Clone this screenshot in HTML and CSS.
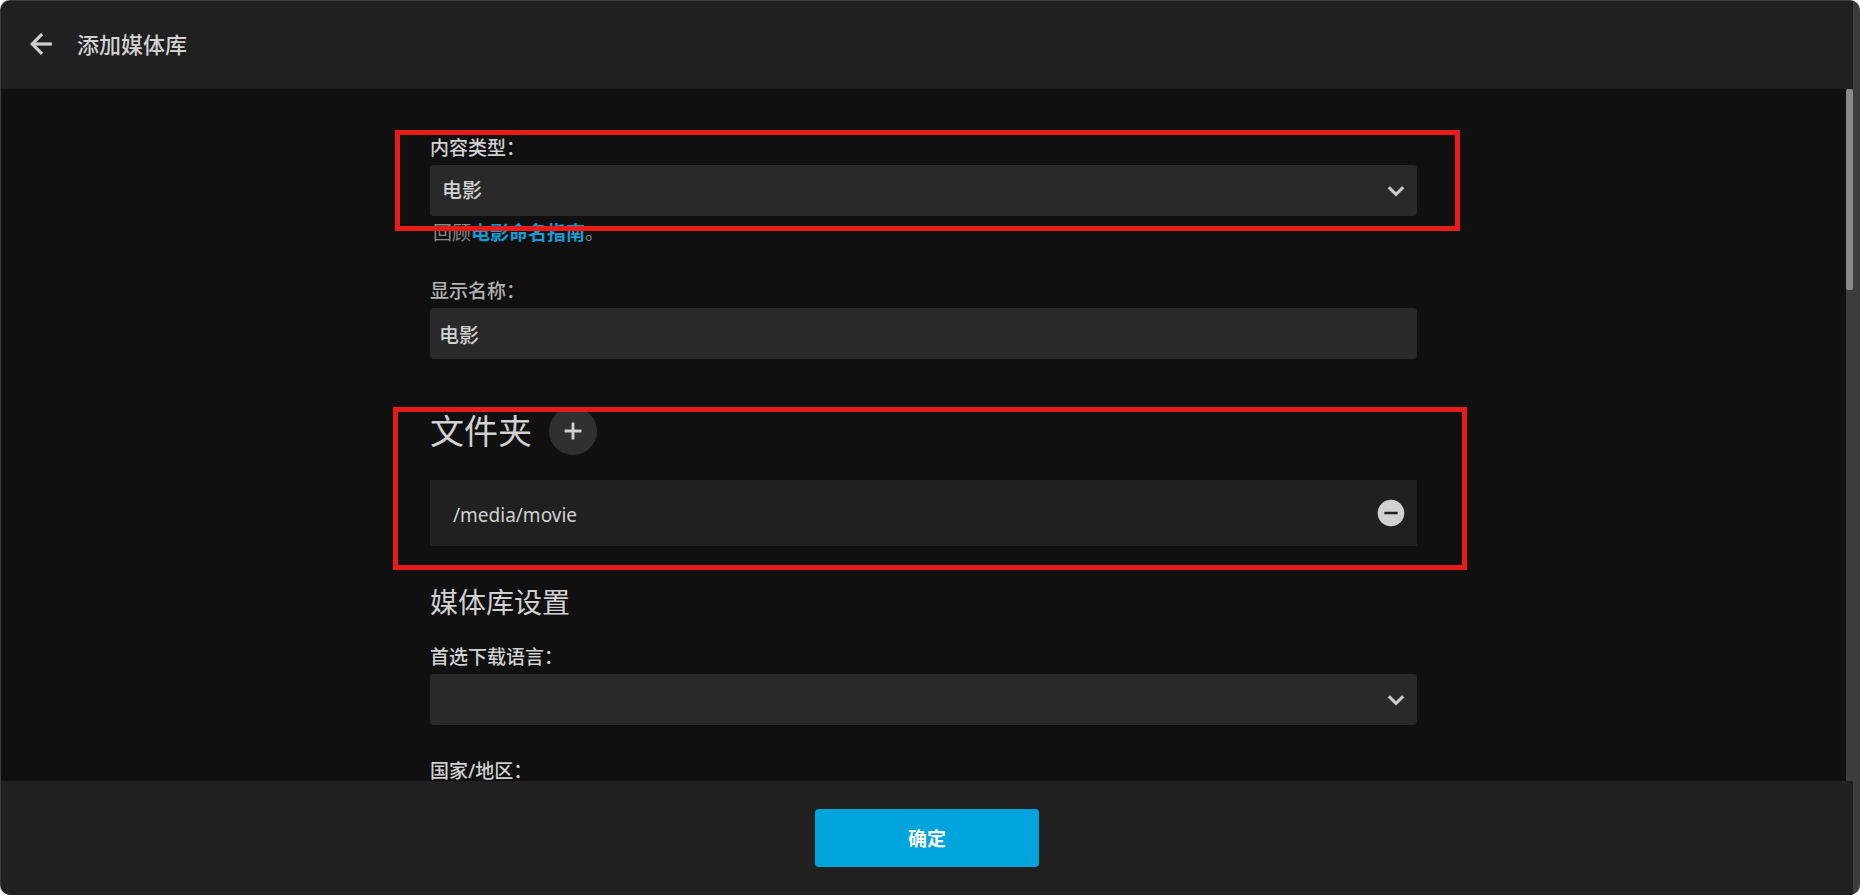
FILE: index.html
```html
<!DOCTYPE html>
<html lang="zh-CN">
<head>
<meta charset="utf-8">
<title>添加媒体库</title>
<link rel="stylesheet" href="styles.css">
</head>
<body>
<div class="window">
  <div class="dialog">
    <header class="dialog-header">
      <button class="icon-button" type="button" aria-label="返回">
        <svg class="icon icon-bold" viewBox="0 0 24 24"><path d="M20 11H7.83l5.59-5.59L12 4l-8 8 8 8 1.41-1.41L7.83 13H20v-2z"/></svg>
      </button>
      <h1 class="dialog-title">添加媒体库</h1>
    </header>
    <div class="dialog-body">
      <main class="scroll-area">
        <form class="form" id="library-form">
          <div class="field field-with-help highlight-host">
            <label class="label" for="content-type">内容类型：</label>
            <div class="select-wrap">
              <select class="control select" id="content-type"><option>电影</option></select>
              <svg class="icon icon-bold chevron" viewBox="0 0 24 24"><path d="M16.59 8.59L12 13.17 7.41 8.59 6 10l6 6 6-6z"/></svg>
            </div>
            <p class="help">回顾<a class="link" href="#guide">电影命名指南</a>。</p>
            <div class="highlight highlight-type"></div>
          </div>
          <div class="field">
            <label class="label label-muted" for="display-name">显示名称：</label>
            <input class="control input" id="display-name" type="text" value="电影">
          </div>
          <section class="folders highlight-host">
            <div class="folders-head">
              <h2 class="folders-title">文件夹</h2>
              <button class="add-button" type="button" aria-label="添加文件夹">
                <svg class="icon icon-small icon-bold" viewBox="0 0 24 24"><path d="M19 13h-6v6h-2v-6H5v-2h6V5h2v6h6v2z"/></svg>
              </button>
            </div>
            <div class="folder-row">
              <span class="folder-path">/media/movie</span>
              <button class="icon-button" type="button" aria-label="移除文件夹">
                <svg class="icon" viewBox="0 0 24 24"><path d="M12 2C6.48 2 2 6.48 2 12s4.48 10 10 10 10-4.48 10-10S17.52 2 12 2zm5 11H7v-2h10v2z"/></svg>
              </button>
            </div>
            <div class="highlight highlight-folders"></div>
          </section>
          <h2 class="section-title">媒体库设置</h2>
          <div class="field">
            <label class="label" for="language">首选下载语言：</label>
            <div class="select-wrap">
              <select class="control select" id="language"><option></option></select>
              <svg class="icon icon-bold chevron" viewBox="0 0 24 24"><path d="M16.59 8.59L12 13.17 7.41 8.59 6 10l6 6 6-6z"/></svg>
            </div>
          </div>
          <div class="field">
            <label class="label" for="country">国家/地区：</label>
            <div class="select-wrap">
              <select class="control select" id="country"><option></option></select>
            </div>
          </div>
        </form>
      </main>
      <div class="scrollbar"><div class="scrollbar-thumb"></div></div>
    </div>
    <footer class="dialog-footer">
      <button class="submit" type="submit" form="library-form">确定</button>
    </footer>
  </div>
</div>
</body>
</html>
```
FILE: styles.css
```css
* {
  box-sizing: border-box;
}

body {
  margin: 0;
  background: #fff;
  color: #d1d1d1;
  font-family: "Noto Sans", "Noto Sans CJK SC", sans-serif;
  font-size: 19px;
}

h1, h2, p {
  margin: 0;
  font-weight: 400;
}

button, input, select {
  font-family: inherit;
  color: inherit;
}

button {
  border: 0;
  padding: 0;
  background: none;
  cursor: pointer;
}

.window {
  height: 100vh;
  padding: 1px 7px 0 1px;
  border-radius: 10px;
  overflow: hidden;
  background: #3c3c3c;
}

.dialog {
  display: flex;
  flex-direction: column;
  height: 100%;
  overflow: hidden;
  border-radius: 9px 0 0 10px;
  background: #101010;
}

.dialog-header {
  flex: none;
  display: flex;
  align-items: center;
  gap: 20px;
  height: 88px;
  padding: 0 24px 2px;
  background: #202020;
}

.dialog-title {
  font-size: 22px;
  line-height: 32px;
  font-weight: 500;
}

.icon {
  display: block;
  width: 32px;
  height: 32px;
  fill: currentColor;
}

.icon-small {
  width: 28px;
  height: 28px;
}

.icon-bold {
  stroke: currentColor;
  stroke-width: 0.4;
}

.dialog-body {
  flex: 1;
  min-height: 0;
  display: flex;
}

.scroll-area {
  flex: 1;
  overflow: hidden;
  padding-top: 45px;
}

.form {
  width: 987px;
  max-width: 90%;
  margin: 0 auto;
}

.field {
  display: flex;
  flex-direction: column;
  gap: 3px;
  margin-bottom: 32px;
}

.field-with-help {
  margin-bottom: 30px;
}

.label {
  line-height: 28px;
  font-weight: 500;
}

.label-muted {
  color: #b0b0b0;
}

.select-wrap {
  position: relative;
}

.control {
  display: block;
  width: 100%;
  height: 51px;
  border: 0;
  border-radius: 4px;
  background: #292929;
  font-size: 20px;
  font-weight: 500;
}

.select {
  appearance: none;
  padding: 0 40px 0 12px;
}

.input {
  padding: 2px 9px 0;
}

.chevron {
  position: absolute;
  right: 5px;
  top: 10px;
  pointer-events: none;
}

.help {
  padding-left: 3px;
  line-height: 28px;
  color: #888;
}

.link {
  color: #0f9ed5;
  font-weight: 700;
  text-decoration: none;
}

.highlight-host {
  position: relative;
}

.highlight {
  position: absolute;
  border: 5px solid #e81b1b;
  pointer-events: none;
}

.highlight-type {
  inset: -4px -43px 16px -35px;
}

.highlight-folders {
  inset: 0 -50px -24px -37px;
}

.folders {
  margin: 48px 0 36px;
}

.folders-head {
  display: flex;
  align-items: center;
  gap: 17px;
  margin-bottom: 25px;
}

.folders-title {
  font-size: 34px;
  line-height: 48px;
}

.add-button {
  display: grid;
  place-items: center;
  width: 48px;
  height: 48px;
  border-radius: 50%;
  background: #303030;
}

.folder-row {
  display: flex;
  align-items: center;
  justify-content: space-between;
  height: 66px;
  padding: 0 10px 0 23px;
  background: #202020;
}

.folder-path {
  padding-top: 3px;
  font-size: 19px;
}

.section-title {
  margin-bottom: 21px;
  font-size: 28px;
  line-height: 40px;
}

.scrollbar {
  flex: none;
  width: 7px;
  background: #3c3c3c;
}

.scrollbar-thumb {
  height: 29%;
  border-radius: 2px;
  background: #888;
}

.dialog-footer {
  flex: none;
  display: flex;
  justify-content: center;
  padding: 28px;
  background: #202020;
}

.submit {
  width: 224px;
  height: 58px;
  border-radius: 4px;
  background: #00a4dc;
  color: #fff;
  font-size: 19px;
  font-weight: 700;
}
```
